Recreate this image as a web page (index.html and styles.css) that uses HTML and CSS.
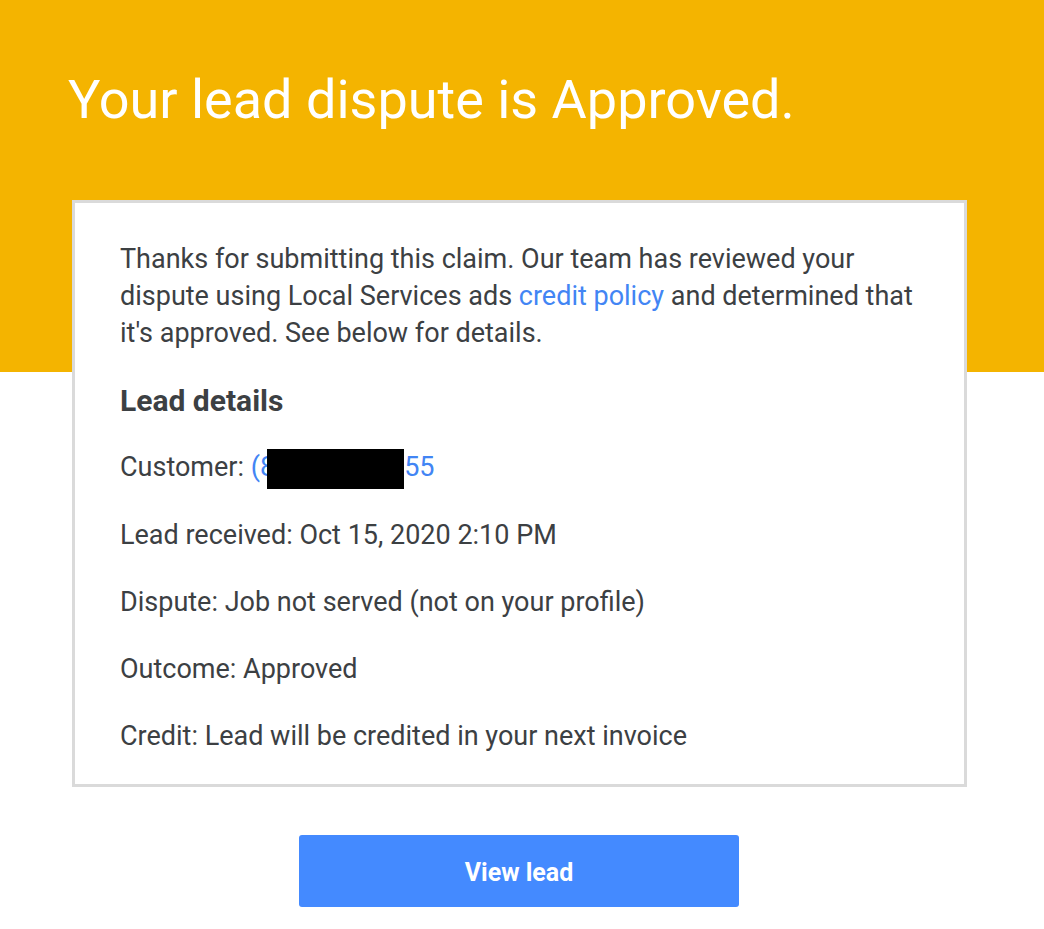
FILE: index.html
```html
<!DOCTYPE html>
<html lang="en">
<head>
    <meta charset="UTF-8">
    <meta name="viewport" content="width=device-width, initial-scale=1.0">
    <title>Your lead dispute is Approved.</title>
    <link rel="stylesheet" href="styles.css">
</head>
<body>

<div class="page">
    <h1 class="title">Your lead dispute is Approved.</h1>

    <div class="card">
        <p>Thanks for submitting this claim. Our team has reviewed your dispute using Local Services ads <a href="#">credit policy</a> and determined that it's approved. See below for details.</p>

        <h2>Lead details</h2>

        <p>Customer: <a href="#">(8<span class="redacted"></span>55</a></p>
        <p>Lead received: Oct 15, 2020 2:10 PM</p>
        <p>Dispute: Job not served (not on your profile)</p>
        <p>Outcome: Approved</p>
        <p>Credit: Lead will be credited in your next invoice</p>
    </div>

    <div class="actions">
        <a class="button" href="#">View lead</a>
    </div>
</div>

</body>
</html>
```

FILE: styles.css
```css
/* Global styles */

* {
  box-sizing: border-box;
  margin: 0;
  padding: 0;
}

body {
  font-family: Roboto, "Liberation Sans", Arial, sans-serif;
  color: #3c4043;
  background: linear-gradient(#f4b400 0, #f4b400 372px, #ffffff 372px); /* yellow band on top */
  background-repeat: no-repeat;
  min-height: 100vh;
}

.page {
  width: 1044px;
  padding-bottom: 20px;
}

/* Header */

.title {
  color: #ffffff;
  font-size: 54px;
  font-weight: 400;
  line-height: 60px;
  padding: 70px 0 0 68px;
  height: 200px;
}

/* Card */

.card {
  background-color: #ffffff;
  width: 895px;
  margin-left: 72px;
  border: 3px solid #dadada;
  padding: 38px 45px 0 45px;
}

.card p,
.card h2 {
  font-size: 27px;
  line-height: 37px;
  margin-bottom: 30px;
}

.card p:last-child {
  margin-bottom: 29px;
}

.card h2 {
  font-size: 30px;
  font-weight: 700;
}

.card a {
  color: #4285f4;
  text-decoration: none;
}

/* black box hiding the phone number */
.redacted {
  display: inline-block;
  width: 137px;
  height: 40px;
  margin: -2px 0 -2px -8px;
  background-color: #000000;
  vertical-align: middle;
}

/* Button */

.actions {
  width: 894px;
  margin-left: 72px;
  padding-top: 48px;
  display: flex;
  justify-content: center;
}

.button {
  display: flex;
  align-items: center;
  justify-content: center;
  width: 440px;
  height: 72px;
  padding-top: 4px;
  background-color: #448aff;
  color: #ffffff;
  font-size: 25px;
  font-weight: 700;
  text-decoration: none;
  border-radius: 3px;
}
```
